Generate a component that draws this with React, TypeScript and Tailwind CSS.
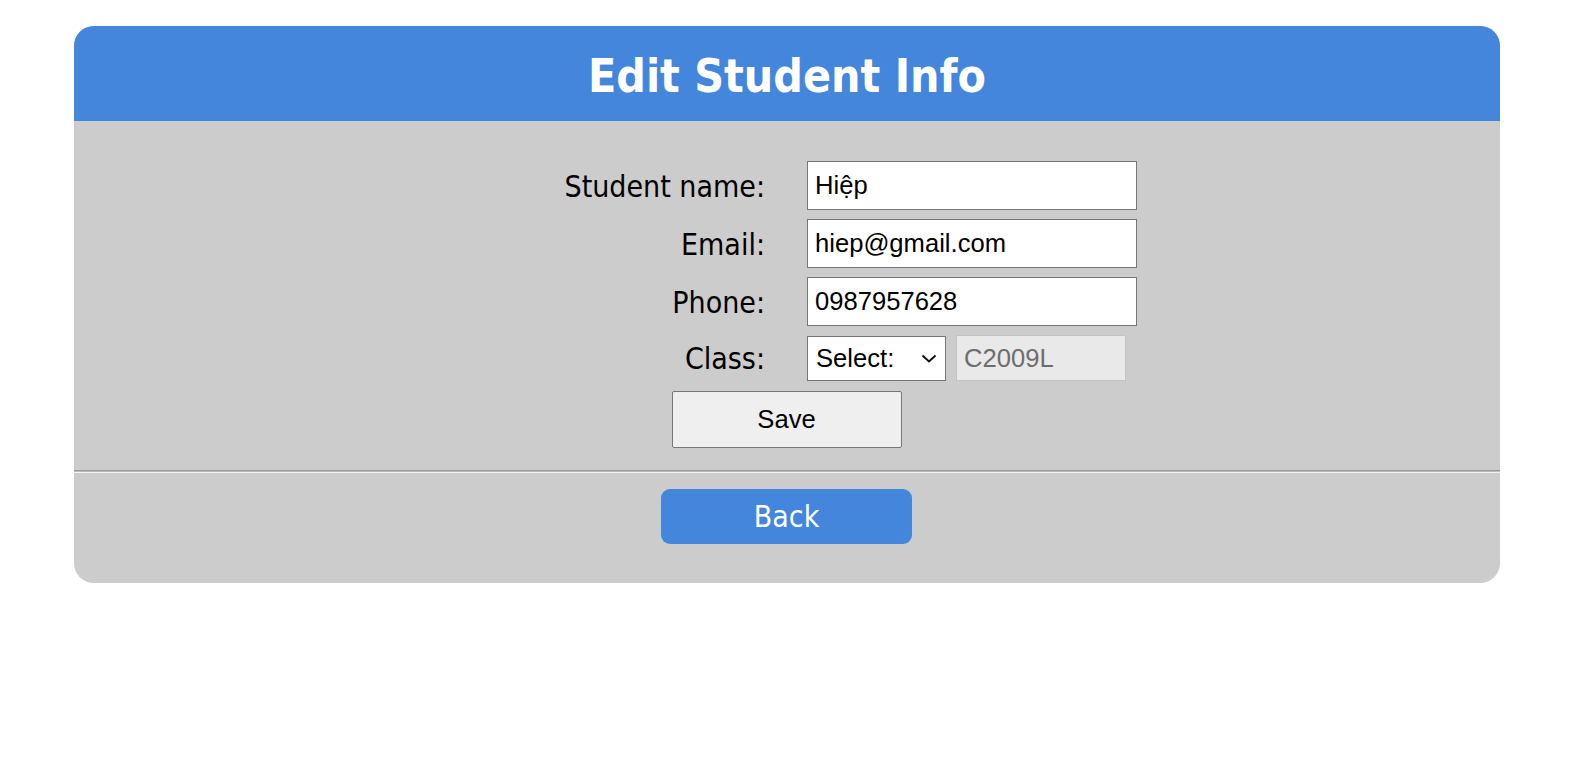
import React from "react";

const tahoma = { fontFamily: '"DejaVu Sans Condensed", "DejaVu Sans", sans-serif' } as React.CSSProperties;
const arial = { fontFamily: '"Liberation Sans", Arial, sans-serif' } as React.CSSProperties;

function Label({ children }: { children: React.ReactNode }) {
  return (
    <div
      className="flex items-center justify-end pt-[2px] text-[30px] text-black font-stretch-condensed leading-none"
      style={tahoma}
    >
      {children}
    </div>
  );
}

function TextInput({ value }: { value: string }) {
  return (
    <input
      type="text"
      defaultValue={value}
      className="h-[49px] w-[330px] border border-[#767676] bg-white px-[7px] text-[25.6px] text-black outline-none"
      style={arial}
    />
  );
}

export default function App() {
  return (
    <div className="min-h-screen w-full bg-white pt-[26px] pl-[74px]">
      <div className="w-[1426px] overflow-hidden rounded-[20px] bg-[#cccccc]">
        <div className="flex h-[95px] items-center justify-center bg-[#4386db]">
          <h1
            className="pt-[4px] text-[46px] font-bold leading-none text-white font-stretch-condensed"
            style={tahoma}
          >
            Edit Student Info
          </h1>
        </div>

        <div className="pt-[40px]">
          <div className="mx-auto grid w-[700px] grid-cols-[328px_330px] gap-x-[42px] gap-y-[9px]">
            <Label>Student name:</Label>
            <TextInput value="Hiệp" />

            <Label>Email:</Label>
            <TextInput value="hiep@gmail.com" />

            <Label>Phone:</Label>
            <TextInput value="0987957628" />

            <Label>Class:</Label>
            <div className="flex items-center gap-[10px]">
              <div className="relative h-[45px] w-[139px]">
                <select
                  className="h-full w-full appearance-none border border-[#767676] bg-white pl-[8px] text-[25.6px] text-black outline-none"
                  style={arial}
                  defaultValue=""
                >
                  <option value="">Select:</option>
                  <option value="C2009L">C2009L</option>
                </select>
                <svg
                  className="pointer-events-none absolute right-[9px] top-[18px]"
                  width="16"
                  height="9"
                  viewBox="0 0 16 9"
                  fill="none"
                >
                  <path d="M1.5 1.5 L8 7.5 L14.5 1.5" stroke="#111" strokeWidth="2" />
                </svg>
              </div>
              <input
                type="text"
                disabled
                defaultValue="C2009L"
                className="h-[46px] w-[170px] border border-[#c4c4c4] bg-[#e9e9e9] px-[7px] text-[25.6px] text-[#6d6d6d] outline-none"
                style={arial}
              />
            </div>
          </div>

          <div className="mt-[10px] flex justify-center">
            <button
              className="-ml-[1px] h-[57px] w-[230px] rounded-[2px] border border-[#767676] bg-[#efefef] text-[25.6px] text-black"
              style={arial}
            >
              Save
            </button>
          </div>

          <div className="mt-[22px]">
            <div className="h-[1px] bg-[#9a9a9a]" />
            <div className="h-[1px] bg-[#bcbcbc]" />
            <div className="h-[1px] bg-[#f2f2f2]" />
          </div>

          <div className="flex justify-center pt-[16px] pb-[39px]">
            <button
              className="-ml-[1px] h-[55px] w-[251px] rounded-[9px] bg-[#4386db] text-[30px] leading-none text-white font-stretch-condensed"
              style={tahoma}
            >
              Back
            </button>
          </div>
        </div>
      </div>
    </div>
  );
}
